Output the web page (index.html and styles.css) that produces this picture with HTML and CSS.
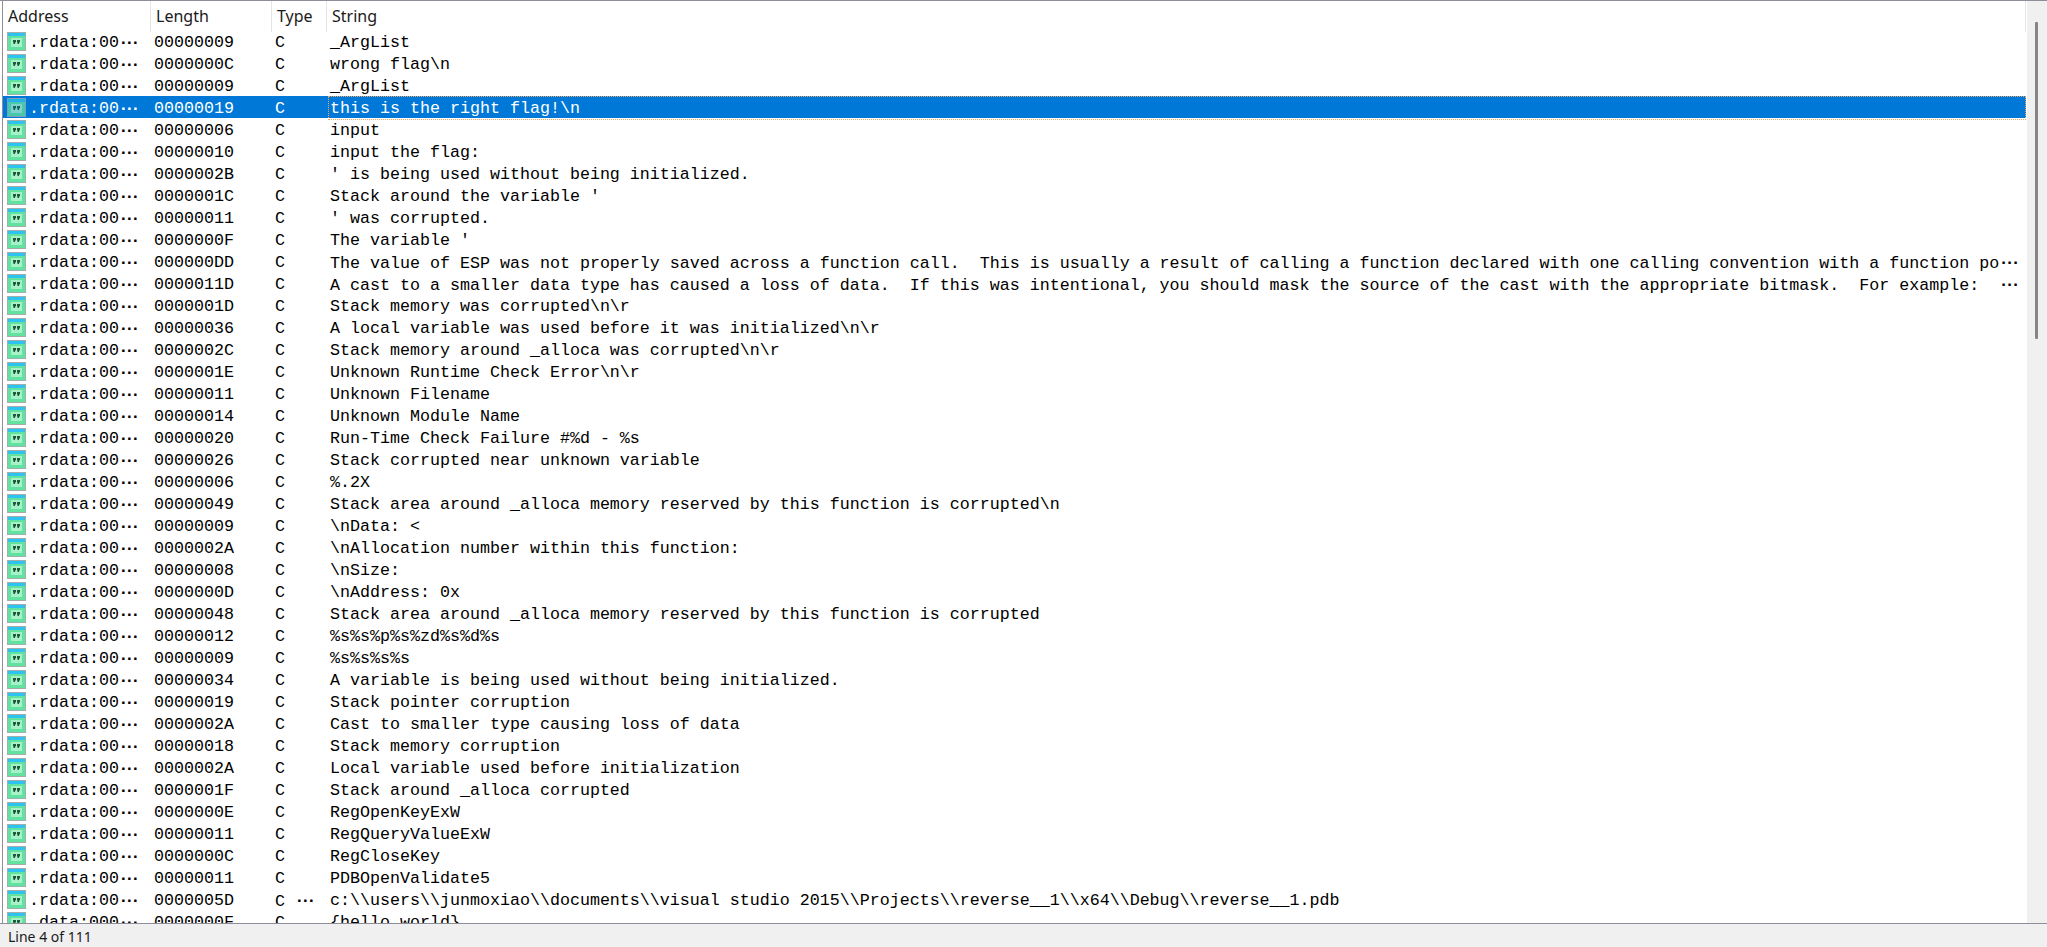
FILE: index.html
```html
<!DOCTYPE html>
<html lang="en">
<head>
<meta charset="utf-8">
<title>Strings window</title>
<link rel="stylesheet" href="styles.css">
</head>
<body>
<svg class="defs" width="0" height="0" aria-hidden="true">
  <symbol id="str" viewBox="0 0 19 19">
    <rect x="0.5" y="0.5" width="18" height="18" fill="#5fe39f" stroke="#a3adad"/>
    <rect x="1" y="1" width="17" height="3" fill="#2cc4ee"/>
    <rect x="4" y="6" width="11" height="9" fill="#a8f0c8"/>
    <path d="M6 8h3v2.5h-1v1.5h-1.5v-1.5h-.5zM10 8h3v2.5h-1v1.5h-1.500v-1.500h-.5z" fill="#1f5a3a"/>
  </symbol>
</svg>
<main class="window">
  <section class="table">
    <header class="head">
      <div class="hcell">Address</div>
      <div class="hcell">Length</div>
      <div class="hcell">Type</div>
      <div class="hcell last">String</div>
    </header>
    <div class="rows">
      <div class="row"><div class="addr"><svg class="ico"><use href="#str"/></svg>.rdata:00<b>···</b></div><div class="len">00000009</div><div class="typ">C</div><div class="str">_ArgList</div></div>
      <div class="row"><div class="addr"><svg class="ico"><use href="#str"/></svg>.rdata:00<b>···</b></div><div class="len">0000000C</div><div class="typ">C</div><div class="str">wrong flag\n</div></div>
      <div class="row"><div class="addr"><svg class="ico"><use href="#str"/></svg>.rdata:00<b>···</b></div><div class="len">00000009</div><div class="typ">C</div><div class="str">_ArgList</div></div>
      <div class="row sel"><div class="addr"><svg class="ico"><use href="#str"/></svg>.rdata:00<b>···</b></div><div class="len">00000019</div><div class="typ">C</div><div class="str">this is the right flag!\n</div></div>
      <div class="row"><div class="addr"><svg class="ico"><use href="#str"/></svg>.rdata:00<b>···</b></div><div class="len">00000006</div><div class="typ">C</div><div class="str">input</div></div>
      <div class="row"><div class="addr"><svg class="ico"><use href="#str"/></svg>.rdata:00<b>···</b></div><div class="len">00000010</div><div class="typ">C</div><div class="str">input the flag:</div></div>
      <div class="row"><div class="addr"><svg class="ico"><use href="#str"/></svg>.rdata:00<b>···</b></div><div class="len">0000002B</div><div class="typ">C</div><div class="str">' is being used without being initialized.</div></div>
      <div class="row"><div class="addr"><svg class="ico"><use href="#str"/></svg>.rdata:00<b>···</b></div><div class="len">0000001C</div><div class="typ">C</div><div class="str">Stack around the variable '</div></div>
      <div class="row"><div class="addr"><svg class="ico"><use href="#str"/></svg>.rdata:00<b>···</b></div><div class="len">00000011</div><div class="typ">C</div><div class="str">' was corrupted.</div></div>
      <div class="row"><div class="addr"><svg class="ico"><use href="#str"/></svg>.rdata:00<b>···</b></div><div class="len">0000000F</div><div class="typ">C</div><div class="str">The variable '</div></div>
      <div class="row"><div class="addr"><svg class="ico"><use href="#str"/></svg>.rdata:00<b>···</b></div><div class="len">000000DD</div><div class="typ">C</div><div class="str">The value of ESP was not properly saved across a function call.  This is usually a result of calling a function declared with one calling convention with a function po<b>···</b></div></div>
      <div class="row"><div class="addr"><svg class="ico"><use href="#str"/></svg>.rdata:00<b>···</b></div><div class="len">0000011D</div><div class="typ">C</div><div class="str">A cast to a smaller data type has caused a loss of data.  If this was intentional, you should mask the source of the cast with the appropriate bitmask.  For example:  <b>···</b></div></div>
      <div class="row"><div class="addr"><svg class="ico"><use href="#str"/></svg>.rdata:00<b>···</b></div><div class="len">0000001D</div><div class="typ">C</div><div class="str">Stack memory was corrupted\n\r</div></div>
      <div class="row"><div class="addr"><svg class="ico"><use href="#str"/></svg>.rdata:00<b>···</b></div><div class="len">00000036</div><div class="typ">C</div><div class="str">A local variable was used before it was initialized\n\r</div></div>
      <div class="row"><div class="addr"><svg class="ico"><use href="#str"/></svg>.rdata:00<b>···</b></div><div class="len">0000002C</div><div class="typ">C</div><div class="str">Stack memory around _alloca was corrupted\n\r</div></div>
      <div class="row"><div class="addr"><svg class="ico"><use href="#str"/></svg>.rdata:00<b>···</b></div><div class="len">0000001E</div><div class="typ">C</div><div class="str">Unknown Runtime Check Error\n\r</div></div>
      <div class="row"><div class="addr"><svg class="ico"><use href="#str"/></svg>.rdata:00<b>···</b></div><div class="len">00000011</div><div class="typ">C</div><div class="str">Unknown Filename</div></div>
      <div class="row"><div class="addr"><svg class="ico"><use href="#str"/></svg>.rdata:00<b>···</b></div><div class="len">00000014</div><div class="typ">C</div><div class="str">Unknown Module Name</div></div>
      <div class="row"><div class="addr"><svg class="ico"><use href="#str"/></svg>.rdata:00<b>···</b></div><div class="len">00000020</div><div class="typ">C</div><div class="str">Run-Time Check Failure #%d - %s</div></div>
      <div class="row"><div class="addr"><svg class="ico"><use href="#str"/></svg>.rdata:00<b>···</b></div><div class="len">00000026</div><div class="typ">C</div><div class="str">Stack corrupted near unknown variable</div></div>
      <div class="row"><div class="addr"><svg class="ico"><use href="#str"/></svg>.rdata:00<b>···</b></div><div class="len">00000006</div><div class="typ">C</div><div class="str">%.2X</div></div>
      <div class="row"><div class="addr"><svg class="ico"><use href="#str"/></svg>.rdata:00<b>···</b></div><div class="len">00000049</div><div class="typ">C</div><div class="str">Stack area around _alloca memory reserved by this function is corrupted\n</div></div>
      <div class="row"><div class="addr"><svg class="ico"><use href="#str"/></svg>.rdata:00<b>···</b></div><div class="len">00000009</div><div class="typ">C</div><div class="str">\nData: &lt;</div></div>
      <div class="row"><div class="addr"><svg class="ico"><use href="#str"/></svg>.rdata:00<b>···</b></div><div class="len">0000002A</div><div class="typ">C</div><div class="str">\nAllocation number within this function:</div></div>
      <div class="row"><div class="addr"><svg class="ico"><use href="#str"/></svg>.rdata:00<b>···</b></div><div class="len">00000008</div><div class="typ">C</div><div class="str">\nSize:</div></div>
      <div class="row"><div class="addr"><svg class="ico"><use href="#str"/></svg>.rdata:00<b>···</b></div><div class="len">0000000D</div><div class="typ">C</div><div class="str">\nAddress: 0x</div></div>
      <div class="row"><div class="addr"><svg class="ico"><use href="#str"/></svg>.rdata:00<b>···</b></div><div class="len">00000048</div><div class="typ">C</div><div class="str">Stack area around _alloca memory reserved by this function is corrupted</div></div>
      <div class="row"><div class="addr"><svg class="ico"><use href="#str"/></svg>.rdata:00<b>···</b></div><div class="len">00000012</div><div class="typ">C</div><div class="str">%s%s%p%s%zd%s%d%s</div></div>
      <div class="row"><div class="addr"><svg class="ico"><use href="#str"/></svg>.rdata:00<b>···</b></div><div class="len">00000009</div><div class="typ">C</div><div class="str">%s%s%s%s</div></div>
      <div class="row"><div class="addr"><svg class="ico"><use href="#str"/></svg>.rdata:00<b>···</b></div><div class="len">00000034</div><div class="typ">C</div><div class="str">A variable is being used without being initialized.</div></div>
      <div class="row"><div class="addr"><svg class="ico"><use href="#str"/></svg>.rdata:00<b>···</b></div><div class="len">00000019</div><div class="typ">C</div><div class="str">Stack pointer corruption</div></div>
      <div class="row"><div class="addr"><svg class="ico"><use href="#str"/></svg>.rdata:00<b>···</b></div><div class="len">0000002A</div><div class="typ">C</div><div class="str">Cast to smaller type causing loss of data</div></div>
      <div class="row"><div class="addr"><svg class="ico"><use href="#str"/></svg>.rdata:00<b>···</b></div><div class="len">00000018</div><div class="typ">C</div><div class="str">Stack memory corruption</div></div>
      <div class="row"><div class="addr"><svg class="ico"><use href="#str"/></svg>.rdata:00<b>···</b></div><div class="len">0000002A</div><div class="typ">C</div><div class="str">Local variable used before initialization</div></div>
      <div class="row"><div class="addr"><svg class="ico"><use href="#str"/></svg>.rdata:00<b>···</b></div><div class="len">0000001F</div><div class="typ">C</div><div class="str">Stack around _alloca corrupted</div></div>
      <div class="row"><div class="addr"><svg class="ico"><use href="#str"/></svg>.rdata:00<b>···</b></div><div class="len">0000000E</div><div class="typ">C</div><div class="str">RegOpenKeyExW</div></div>
      <div class="row"><div class="addr"><svg class="ico"><use href="#str"/></svg>.rdata:00<b>···</b></div><div class="len">00000011</div><div class="typ">C</div><div class="str">RegQueryValueExW</div></div>
      <div class="row"><div class="addr"><svg class="ico"><use href="#str"/></svg>.rdata:00<b>···</b></div><div class="len">0000000C</div><div class="typ">C</div><div class="str">RegCloseKey</div></div>
      <div class="row"><div class="addr"><svg class="ico"><use href="#str"/></svg>.rdata:00<b>···</b></div><div class="len">00000011</div><div class="typ">C</div><div class="str">PDBOpenValidate5</div></div>
      <div class="row"><div class="addr"><svg class="ico"><use href="#str"/></svg>.rdata:00<b>···</b></div><div class="len">0000005D</div><div class="typ">C<b class="more">···</b></div><div class="str">c:\\users\\junmoxiao\\documents\\visual studio 2015\\Projects\\reverse__1\\x64\\Debug\\reverse__1.pdb</div></div>
      <div class="row"><div class="addr"><svg class="ico"><use href="#str"/></svg>.data:000<b>···</b></div><div class="len">0000000F</div><div class="typ">C</div><div class="str">{hello world}</div></div>
    </div>
  </section>
  <aside class="scrollbar"><div class="thumb"></div></aside>
</main>
<footer class="status">Line 4 of 111</footer>
</body>
</html>
```
FILE: styles.css
```css
* { box-sizing: border-box; }
html, body { margin: 0; height: 100%; overflow: hidden; }
body {
  display: flex;
  flex-direction: column;
  background: #f0f0f0;
  color: #000;
}
.defs { position: absolute; }
.window {
  flex: 1;
  min-height: 0;
  display: flex;
  border-top: 1px solid #8e8e98;
  border-bottom: 1px solid #8e8e98;
  background: #fff;
}
.table {
  flex: 1;
  min-width: 0;
  overflow: hidden;
  margin-left: 2px;
  border-left: 1px solid #8e8e98;
}
.head {
  display: grid;
  grid-template-columns: 148px 121px 55px 1fr;
  height: 29px;
  font: 16px/31px "Noto Sans", sans-serif;
  color: #1a1a1a;
}
.hcell { padding-left: 5px; border-right: 1px solid #e5e5e5; }
.hcell.last { margin-right: 1px; }
.rows {
  font: 16.67px/22px "Liberation Mono", monospace;
}
.row {
  display: grid;
  grid-template-columns: 147px 121px 55px 1fr;
  height: 22px;
  margin-right: 1px;
  white-space: pre;
}
.addr { display: flex; padding: 2px 0 0 4px; }
.ico { width: 19px; height: 19px; margin: 0 3px 0 0; flex: none; }
.len, .typ { padding: 2px 0 0 4px; }
.str { margin-left: 2px; padding: 2px 0 0 2px; }
.addr b, .str b, .more {
  margin-left: 2px;
  font-family: "Liberation Sans", sans-serif;
  font-weight: 700;
  letter-spacing: 0.5px;
}
.typ .more { margin-left: 12px; }
.sel { background: #0078d7; color: #fff; }
.sel .str { outline: 1px dotted #f0a868; outline-offset: -1px; }
.sel .ico { opacity: 0.75; }
.scrollbar {
  flex: none;
  width: 20px;
  background: #f0f0f0;
  padding: 21px 8px 0 8px;
}
.thumb { width: 3px; height: 317px; background: #858585; border-radius: 1px; }
.status {
  flex: none;
  height: 23px;
  padding-left: 8px;
  font: 14px/25px "Noto Sans", sans-serif;
  color: #1a1a1a;
}
```
